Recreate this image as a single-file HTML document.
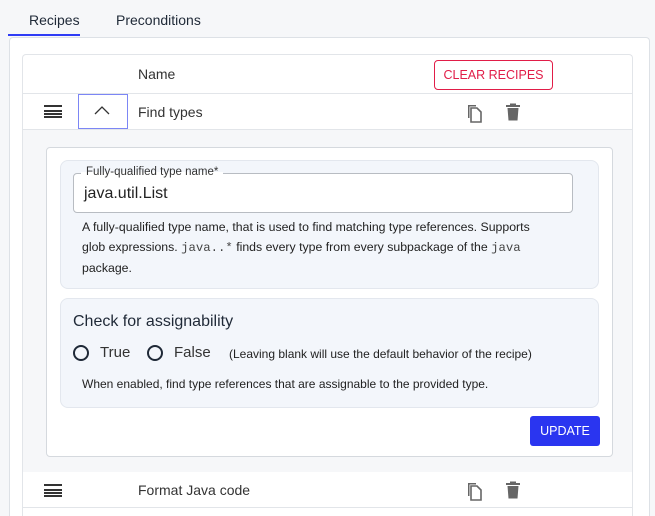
<!DOCTYPE html>
<html><head><style>
*{box-sizing:border-box;margin:0;padding:0}
html,body{width:655px;height:516px;overflow:hidden}
body{background:#f6f7f9;font-family:"Liberation Sans",sans-serif;color:#1f2937;position:relative}
.a{position:absolute}
.ham{position:absolute;width:18px;height:13px;border-top:2px solid #333;border-bottom:2px solid #333}
.ham:before,.ham:after{content:"";position:absolute;left:0;right:0;height:2px;background:#333}
.ham:before{top:2.5px}.ham:after{top:6px}
.radio{position:absolute;width:16px;height:16px;border:2px solid #1f2937;border-radius:50%}
</style></head><body>
<div class="a" style="left:29px;top:12px;font-size:14px;color:#1f2937">Recipes</div>
<div class="a" style="left:116px;top:12px;font-size:14px;color:#1f2937">Preconditions</div>
<div class="a" style="left:8px;top:34px;width:72px;height:2px;background:#2f3cf5"></div>
<div class="a" style="left:9px;top:37px;width:641px;height:479px;background:#fff;border:1px solid #dde1e6;border-bottom:none;border-radius:4px 4px 0 0"></div>
<div class="a" style="left:22px;top:54px;width:611px;height:462px;border:1px solid #e2e5e9;border-bottom:none;border-radius:4px 4px 0 0;background:#fff"></div>
<div class="a" style="left:138px;top:66px;font-size:14px;color:#333">Name</div>
<div class="a" style="left:434px;top:60px;width:119px;height:30px;border:1px solid #e11d48;border-radius:4px;color:#e11d48;font-size:12.5px;text-align:center;line-height:28px">CLEAR RECIPES</div>
<div class="a" style="left:23px;top:93px;width:609px;height:1px;background:#e2e5e9"></div>
<div class="ham" style="left:44px;top:105px"></div>
<div class="a" style="left:78px;top:94px;width:50px;height:35px;border:1px solid #7c86f5"></div>
<svg class="a" style="left:93px;top:104px" width="18" height="14"><path d="M2 10 L9 3 L16 10" fill="none" stroke="#333" stroke-width="1.3"/></svg>
<div class="a" style="left:138px;top:104px;font-size:14px;color:#333">Find types</div>
<svg class="a" style="left:466px;top:103px" width="18" height="20" viewBox="0 0 18 20"><path d="M2 2h8v1.5H3.5V15H2z" fill="#666"/><path d="M5 5h6l4 4v10H5z" fill="none" stroke="#666" stroke-width="1.6"/></svg>
<svg class="a" style="left:505px;top:103px" width="16" height="18" viewBox="0 0 16 18"><path d="M1 2h14v2H1zM5 0.5h6v2H5zM2.5 5h11l-1 12.5h-9z" fill="#666"/></svg>
<div class="a" style="left:23px;top:129px;width:609px;height:1px;background:#e2e5e9"></div>
<div class="a" style="left:23px;top:130px;width:609px;height:342px;background:#f6f7f9"></div>
<div class="a" style="left:46px;top:147px;width:567px;height:310px;background:#fff;border:1px solid #d5d9de;border-radius:4px"></div>
<div class="a" style="left:60px;top:160px;width:539px;height:129px;background:#f3f6fb;border:1px solid #e3e7ee;border-radius:8px"></div>
<div class="a" style="left:73px;top:173px;width:500px;height:40px;border:1px solid #b8bcc2;border-radius:4px;background:#fff"></div>
<div class="a" style="left:81px;top:164px;padding:0 5px;font-size:11.5px;color:#333;line-height:16px;background:linear-gradient(#f3f6fb 50%,#fff 50%)">Fully-qualified type name*</div>
<div class="a" style="left:84px;top:185px;font-size:16px;color:#222">java.util.List</div>
<div class="a" style="left:82px;top:217px;white-space:nowrap;font-size:12.3px;color:#222;line-height:20px">A fully-qualified type name, that is used to find matching type references. Supports<br>glob expressions. <span style="font-family:'Liberation Mono',monospace;color:#444">java..*</span> finds every type from every subpackage of the <span style="font-family:'Liberation Mono',monospace;color:#444">java</span><br>package.</div>
<div class="a" style="left:60px;top:298px;width:539px;height:110px;background:#f3f6fb;border:1px solid #e3e7ee;border-radius:8px"></div>
<div class="a" style="left:73px;top:313px;font-size:16px;color:#1f2937">Check for assignability</div>
<div class="radio" style="left:73px;top:345px"></div>
<div class="a" style="left:100px;top:344px;font-size:15px;color:#333">True</div>
<div class="radio" style="left:147px;top:345px"></div>
<div class="a" style="left:174px;top:344px;font-size:15px;color:#333">False</div>
<div class="a" style="left:229px;top:347px;font-size:12px;color:#222">(Leaving blank will use the default behavior of the recipe)</div>
<div class="a" style="left:82px;top:377px;font-size:12px;color:#222">When enabled, find type references that are assignable to the provided type.</div>
<div class="a" style="left:530px;top:416px;width:70px;height:30px;background:#2a35f0;border-radius:3px;color:#fff;font-size:12.5px;text-align:center;line-height:30px">UPDATE</div>
<div class="ham" style="left:44px;top:484px"></div>
<div class="a" style="left:138px;top:482px;font-size:14px;color:#333">Format Java code</div>
<svg class="a" style="left:466px;top:481px" width="18" height="20" viewBox="0 0 18 20"><path d="M2 2h8v1.5H3.5V15H2z" fill="#666"/><path d="M5 5h6l4 4v10H5z" fill="none" stroke="#666" stroke-width="1.6"/></svg>
<svg class="a" style="left:505px;top:481px" width="16" height="18" viewBox="0 0 16 18"><path d="M1 2h14v2H1zM5 0.5h6v2H5zM2.5 5h11l-1 12.5h-9z" fill="#666"/></svg>
<div class="a" style="left:23px;top:507px;width:609px;height:1px;background:#e2e5e9"></div>
</body></html>
